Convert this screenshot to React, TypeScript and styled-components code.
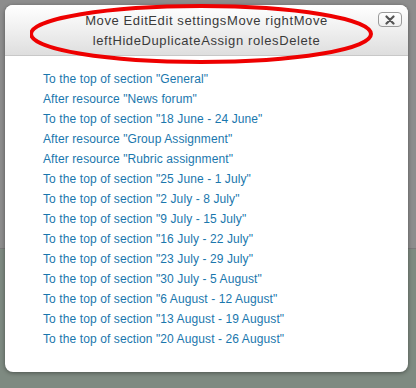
import React from 'react'
import styled, {createGlobalStyle} from 'styled-components'

const targets = [
    'To the top of section "General"',
    'After resource "News forum"',
    'To the top of section "18 June - 24 June"',
    'After resource "Group Assignment"',
    'After resource "Rubric assignment"',
    'To the top of section "25 June - 1 July"',
    'To the top of section "2 July - 8 July"',
    'To the top of section "9 July - 15 July"',
    'To the top of section "16 July - 22 July"',
    'To the top of section "23 July - 29 July"',
    'To the top of section "30 July - 5 August"',
    'To the top of section "6 August - 12 August"',
    'To the top of section "13 August - 19 August"',
    'To the top of section "20 August - 26 August"',
]

const GlobalStyle = createGlobalStyle`
  html, body {
    margin: 0;
    padding: 0;
  }
  body {
    width: 416px;
    height: 388px;
    overflow: hidden;
    font-family: "Liberation Sans", Arial, sans-serif;
  }
`

const App = () => {
    return (
        <Page>
            <GlobalStyle/>
            <Backdrop>
                <BackTop/>
                <BackBottom/>
            </Backdrop>
            <Dialog>
                <Header>
                    <Title>Move EditEdit settingsMove rightMove leftHideDuplicateAssign rolesDelete</Title>
                    <CloseButton aria-label="close">
                        <svg width="10" height="10" viewBox="0 0 10 10">
                            <path d="M1.5 1.5 L8.5 8.5 M8.5 1.5 L1.5 8.5" stroke="#555" strokeWidth="2.2" strokeLinecap="round"/>
                        </svg>
                    </CloseButton>
                    <Highlight width="350" height="64" viewBox="0 0 350 64">
                        <ellipse cx="171" cy="30" rx="170" ry="28" fill="none" stroke="#ee0000" strokeWidth="4"/>
                    </Highlight>
                </Header>
                <Body>
                    <TargetList>
                        {targets.map((t) => (
                            <li key={t}><TargetLink href="#">{t}</TargetLink></li>
                        ))}
                    </TargetList>
                </Body>
            </Dialog>
        </Page>
    )
}
export default App

let Page = styled.div`
  position: relative;
  width: 416px;
  height: 388px;
  overflow: hidden;
`

let Backdrop = styled.div`
  position: absolute;
  inset: 0;
  display: flex;
  flex-direction: column;
`

let BackTop = styled.div`
  height: 248px;
  background: #8d8d8d;
  border-bottom: 1px solid #7a7a7a;
`

let BackBottom = styled.div`
  flex: 1;
  background: #7e8a81;
`

let Dialog = styled.div`
  position: absolute;
  left: 5px;
  top: 5px;
  width: 403px;
  height: 367px;
  background: #ffffff;
  border-radius: 8px;
  box-shadow: 0 1px 4px rgba(0, 0, 0, 0.4);
  display: flex;
  flex-direction: column;
`

let Header = styled.div`
  position: relative;
  height: 51px;
  box-sizing: border-box;
  padding: 6px 40px 0;
  border-radius: 8px 8px 0 0;
  background: linear-gradient(to bottom, #ffffff 0%, #f1f1f1 45%, #dedede 100%);
  border-bottom: 1px solid #c8c8c8;
`

let Title = styled.div`
  font-size: 13px;
  line-height: 20px;
  letter-spacing: 0.6px;
  color: #3a3a3a;
  text-align: center;
`

let CloseButton = styled.button`
  position: absolute;
  right: 6px;
  top: 7px;
  width: 24px;
  height: 15px;
  padding: 0;
  display: flex;
  align-items: center;
  justify-content: center;
  background: linear-gradient(to bottom, #ffffff, #f0f0f0);
  border: 1px solid #9a9a9a;
  border-radius: 4px;
`

let Highlight = styled.svg`
  position: absolute;
  left: 25px;
  top: -1px;
  pointer-events: none;
`

let Body = styled.div`
  flex: 1;
  padding: 13px 20px 0 38px;
`

let TargetList = styled.ul`
  list-style: none;
  margin: 0;
  padding: 0;
  font-size: 12px;
  line-height: 20px;
  letter-spacing: 0.1px;
`

let TargetLink = styled.a`
  color: #1a77ad;
  text-decoration: none;
`
